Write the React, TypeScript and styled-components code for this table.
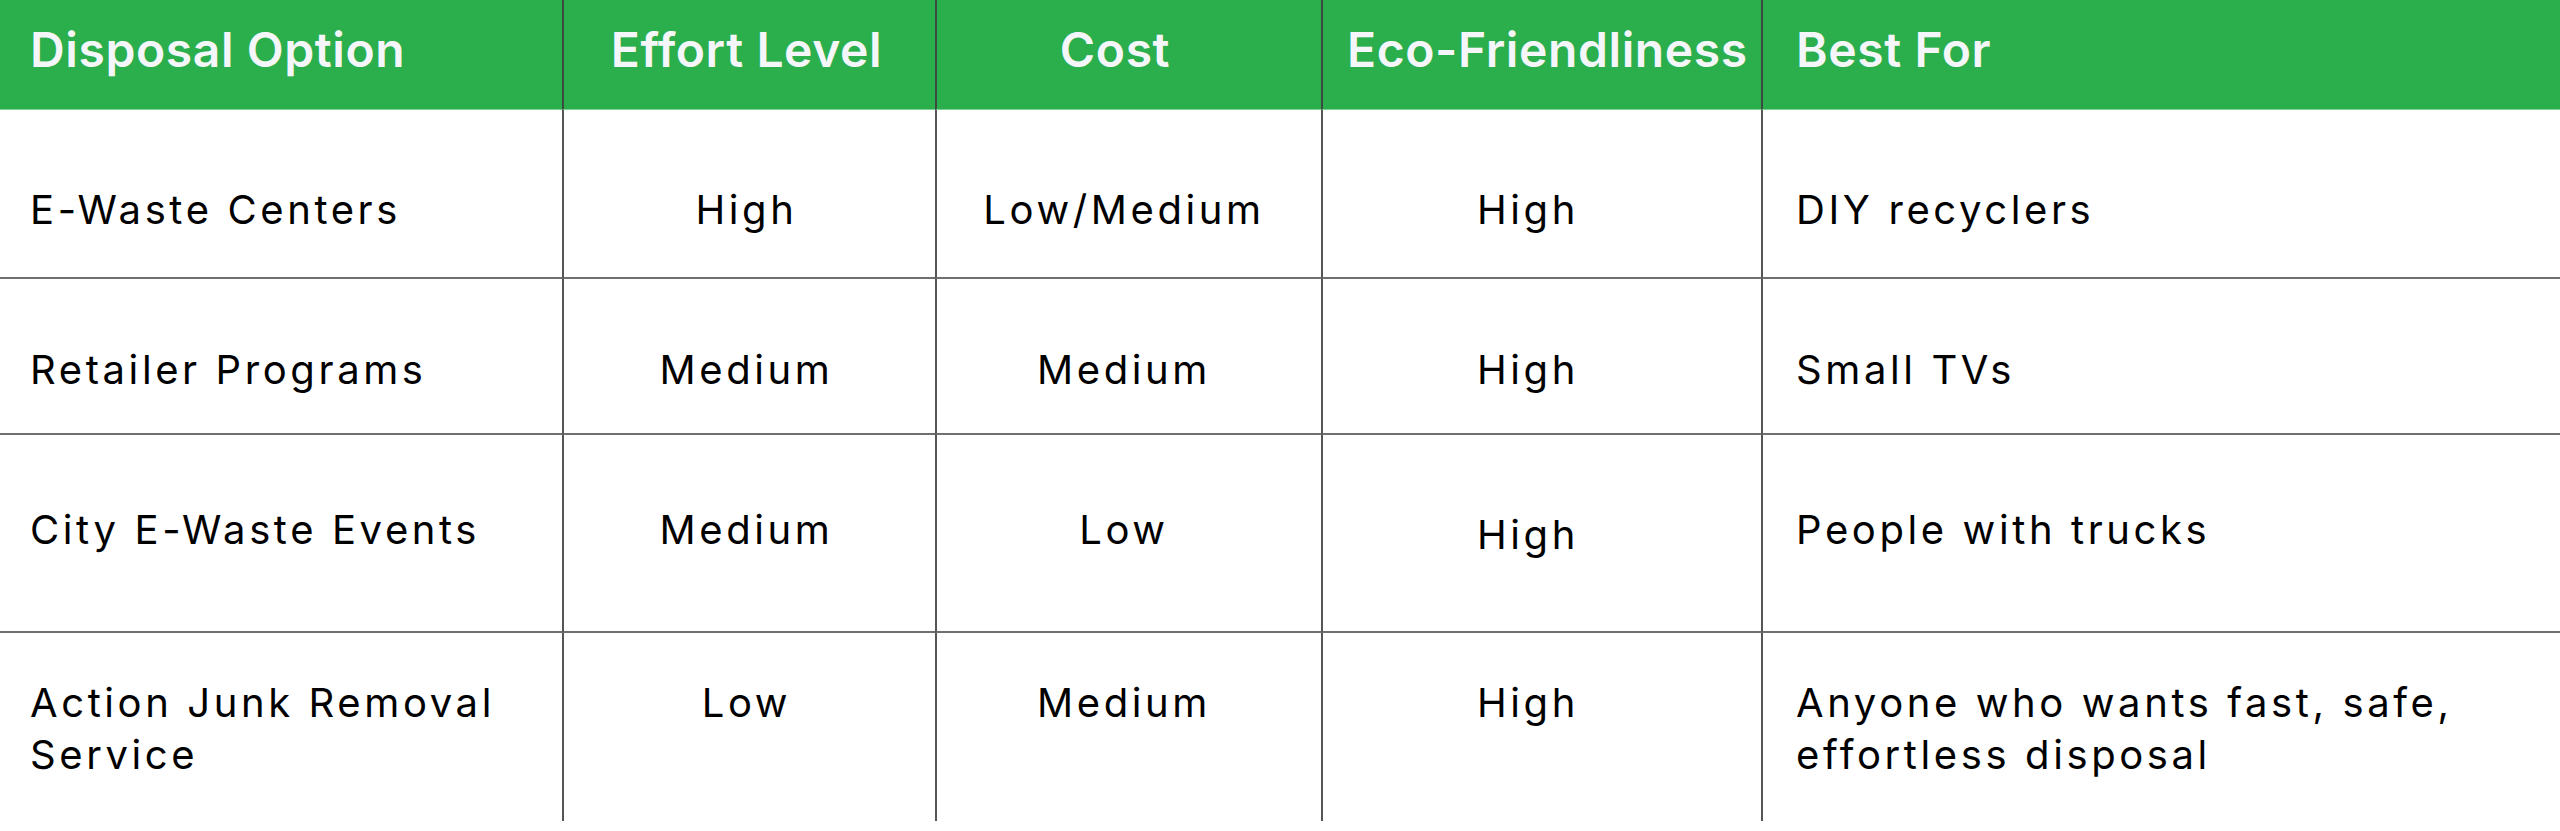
import React from "react";
import styled, { createGlobalStyle } from "styled-components";

const GlobalStyle = createGlobalStyle`
  html, body {
    margin: 0;
    padding: 0;
    background: #ffffff;
  }
  body {
    font-family: "Inter", "Liberation Sans", sans-serif;
    -webkit-font-smoothing: antialiased;
  }
`;

type Align = "left" | "center";

interface Column {
  title: string;
  width: number;
  align: Align;
  padLeft: number;
  padRight: number;
  // the header label sits a little off the body text in some columns
  headShift?: number;
}

interface Row {
  height: number;
  padTop: number;
  border: boolean;
  cells: string[];
  extraTop?: number[];
}

const COLUMNS: Column[] = [
  { title: "Disposal Option", width: 562, align: "left", padLeft: 30, padRight: 24 },
  { title: "Effort Level", width: 373, align: "center", padLeft: 28, padRight: 34 },
  { title: "Cost", width: 386, align: "center", padLeft: 24, padRight: 34, headShift: -9 },
  { title: "Eco-Friendliness", width: 440, align: "center", padLeft: 24, padRight: 52 },
  { title: "Best For", width: 799, align: "left", padLeft: 33, padRight: 24 },
];

const ROWS: Row[] = [
  {
    height: 169,
    padTop: 74,
    border: true,
    cells: ["E-Waste Centers", "High", "Low/Medium", "High", "DIY recyclers"],
  },
  {
    height: 156,
    padTop: 65,
    border: true,
    cells: ["Retailer Programs", "Medium", "Medium", "High", "Small TVs"],
  },
  {
    height: 198,
    padTop: 69,
    border: true,
    cells: ["City E-Waste Events", "Medium", "Low", "High", "People with trucks"],
    extraTop: [0, 0, 0, 5, 0],
  },
  {
    height: 188,
    padTop: 44,
    border: false,
    cells: [
      "Action Junk Removal Service",
      "Low",
      "Medium",
      "High",
      "Anyone who wants fast, safe, effortless disposal",
    ],
  },
];

const App = () => {
  return (
    <>
      <GlobalStyle />
      <Table
        $columns={COLUMNS.map((c) => `${c.width}px`).join(" ")}
        $rows={["110px", ...ROWS.map((r) => `${r.height}px`)].join(" ")}
      >
        {COLUMNS.map((col, i) => (
          <HeadCell
            key={col.title}
            $align={col.align}
            $padLeft={col.padLeft}
            $padRight={col.padRight - (col.headShift ?? 0) * 2}
            $divider={i > 0}
          >
            {col.title}
          </HeadCell>
        ))}
        {ROWS.map((row, r) =>
          row.cells.map((text, i) => (
            <BodyCell
              key={`${r}-${i}`}
              $align={COLUMNS[i].align}
              $padLeft={COLUMNS[i].padLeft}
              $padRight={COLUMNS[i].padRight}
              $padTop={row.padTop + (row.extraTop?.[i] ?? 0)}
              $divider={i > 0}
              $border={row.border}
            >
              {text}
            </BodyCell>
          ))
        )}
      </Table>
    </>
  );
};

const Table = styled.div<{ $columns: string; $rows: string }>`
  display: grid;
  grid-template-columns: ${(props) => props.$columns};
  grid-template-rows: ${(props) => props.$rows};
  width: 2560px;
  background: #ffffff;
`;

interface CellProps {
  $align: Align;
  $padLeft: number;
  $padRight: number;
  $divider: boolean;
}

const HeadCell = styled.div<CellProps>`
  box-sizing: border-box;
  background: #2bae4c;
  border-bottom: 1px solid #7fd092;
  border-left: ${(props) => (props.$divider ? "2px solid #3c4a3f" : "none")};
  padding: 20px ${(props) => props.$padRight}px 0
    ${(props) => props.$padLeft}px;
  text-align: ${(props) => props.$align};
  color: #f4f6fa;
  font-weight: 600;
  font-size: 48px;
  line-height: 60px;
  letter-spacing: 0.6px;
  white-space: nowrap;
`;

const BodyCell = styled.div<CellProps & { $padTop: number; $border: boolean }>`
  box-sizing: border-box;
  background: #ffffff;
  border-left: ${(props) => (props.$divider ? "2px solid #555555" : "none")};
  border-bottom: ${(props) => (props.$border ? "2px solid #6f6f6f" : "none")};
  padding: ${(props) => props.$padTop}px ${(props) => props.$padRight}px 0
    ${(props) => props.$padLeft}px;
  text-align: ${(props) => props.$align};
  color: #000000;
  font-weight: 400;
  font-size: 40px;
  line-height: 52px;
  letter-spacing: 3.6px;
`;

export default App;
